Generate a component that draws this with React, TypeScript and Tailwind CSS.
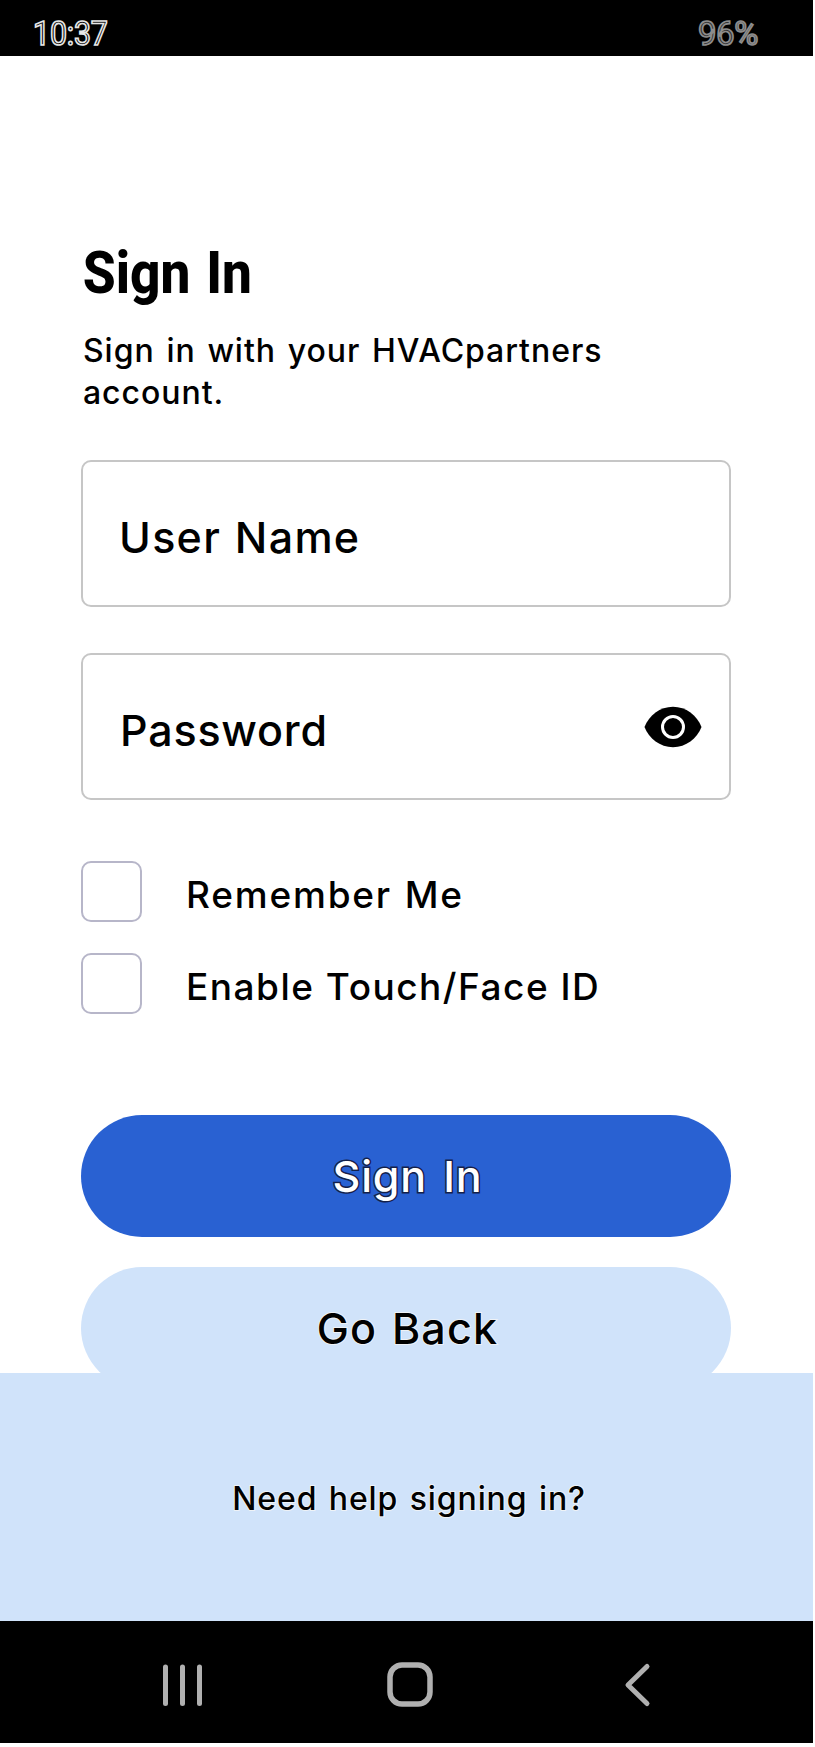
import React, { useState } from 'react';

type CheckboxRowProps = {
  id: string;
  label: string;
  className?: string;
};

const EyeIcon = () => (
  <svg viewBox="0 0 58 42" className="h-[42px] w-[58px]" aria-hidden="true">
    <path
      d="M0.500 21C5 9.500 16 0.800 29 0.800S53 9.500 57.500 21C53 32.500 42 41.200 29 41.200S5 32.500 0.500 21Z"
      fill="#000"
    />
    <circle cx="29" cy="21" r="10.5" fill="none" stroke="#fff" strokeWidth="3" />
  </svg>
);

const CheckboxRow = ({ id, label, className }: CheckboxRowProps) => (
  <div className="flex h-[61px] items-center">
    <input
      type="checkbox"
      id={id}
      className="h-[61px] w-[61px] shrink-0 appearance-none rounded-[10px] border-2 border-[#b7b6c9] bg-white"
    />
    <label
      htmlFor={id}
      className={`ml-[44px] pt-[6px] text-[37px] leading-[44px] font-[450] whitespace-nowrap ${className}`}
    >
      {label}
    </label>
  </div>
);

const StatusBar = () => (
  <div className="flex h-14 items-center justify-between bg-black pt-3 pr-[55px] pl-[33px] font-[Roboto,sans-serif] text-[33px] leading-[38px]">
    <span className="origin-left scale-x-[0.92] tracking-[-0.2px] text-black [-webkit-text-stroke:1.7px_#e6e6e6]">
      10:37
    </span>
    <span className="tracking-[-0.4px] text-[#333] [-webkit-text-stroke:1.7px_#8c8c8c]">96%</span>
  </div>
);

const NavigationBar = () => (
  <div className="flex h-[122px] bg-black">
    <svg viewBox="0 0 813 122" className="h-[122px] w-[813px]" fill="none" stroke="#b0b0b0" strokeLinecap="round">
      <path d="M165.500 46V82.500M182.500 46V82.500M199.500 46V82.500" strokeWidth="5" />
      <rect x="390" y="44" width="40" height="39" rx="12" strokeWidth="5.5" />
      <path d="M647 45.500L628 64L647 82.500" strokeWidth="5" strokeLinejoin="round" />
    </svg>
  </div>
);

const App = () => {
  const [showPassword, setShowPassword] = useState(false);

  return (
    <div className="min-h-[1747px] bg-white font-[Inter,sans-serif] text-black">
      <div className="w-[813px]">
        <StatusBar />

        <main className="h-[1317px] overflow-hidden px-[81px] pt-[182px]">
          <h1 className="h-[70px] origin-left scale-x-[0.9] pl-0.5 font-[Roboto,sans-serif] text-[59px] leading-[70px] font-extrabold tracking-[0px] whitespace-nowrap [word-spacing:3px]">
            Sign In
          </h1>
          <p className="mt-[22px] h-[83px] pl-0.5 text-[32px] leading-[41.5px] font-[450] tracking-[0.95px] [word-spacing:2.3px]">
            Sign in with your HVACpartners
            <br />
            account.
          </p>

          <form onSubmit={(e) => e.preventDefault()}>
            <input
              type="text"
              aria-label="User Name"
              placeholder="User Name"
              className="mt-[47px] block h-[147px] w-[650px] rounded-[10px] border-2 border-[#c6c6c6] px-[36px] pt-1.5 text-[43px] font-[450] tracking-[1.3px] [word-spacing:1px] placeholder:text-black placeholder:opacity-100"
            />
            <div className="mt-[46px] flex h-[147px] w-[650px] items-center rounded-[10px] border-2 border-[#c6c6c6] pr-[27px] pl-[37px]">
              <input
                type={showPassword ? 'text' : 'password'}
                aria-label="Password"
                placeholder="Password"
                className="h-full min-w-0 flex-1 pt-1.5 text-[43px] font-[450] tracking-[0.8px] outline-none placeholder:text-black placeholder:opacity-100"
              />
              <button type="button" aria-label="Show password" onClick={() => setShowPassword(!showPassword)}>
                <EyeIcon />
              </button>
            </div>

            <div className="mt-[61px] flex flex-col gap-[31px]">
              <CheckboxRow id="remember" label="Remember Me" className="tracking-[1.8px] [word-spacing:1px]" />
              <CheckboxRow id="biometrics" label="Enable Touch/Face ID" className="tracking-[1.5px]" />
            </div>

            <button
              type="submit"
              className="mt-[101px] block h-[122px] w-[650px] rounded-full bg-[#2961d2] pl-[3px] text-[43px] font-medium tracking-[0.8px] text-white [word-spacing:4px] [-webkit-text-stroke:3px_#14204a] [paint-order:stroke_fill]"
            >
              Sign In
            </button>
            <button
              type="button"
              className="mt-[30px] block h-[122px] w-[650px] rounded-full bg-[#d0e3fa] pl-[3px] text-[43px] font-[450] tracking-[1.2px] [word-spacing:2px] [-webkit-text-stroke:2px_#eef2f6] [paint-order:stroke_fill]"
            >
              Go Back
            </button>
          </form>
        </main>

        <footer className="flex h-[248px] justify-center bg-[#d0e3fa] pt-[105px]">
          <a
            href="#help"
            className="h-[41px] pl-[5px] text-[32px] leading-[41px] font-[450] tracking-[0.9px] [word-spacing:2px] [-webkit-text-stroke:2px_#eef2f6] [paint-order:stroke_fill]"
          >
            Need help signing in?
          </a>
        </footer>

        <NavigationBar />
      </div>
    </div>
  );
};

export default App;
